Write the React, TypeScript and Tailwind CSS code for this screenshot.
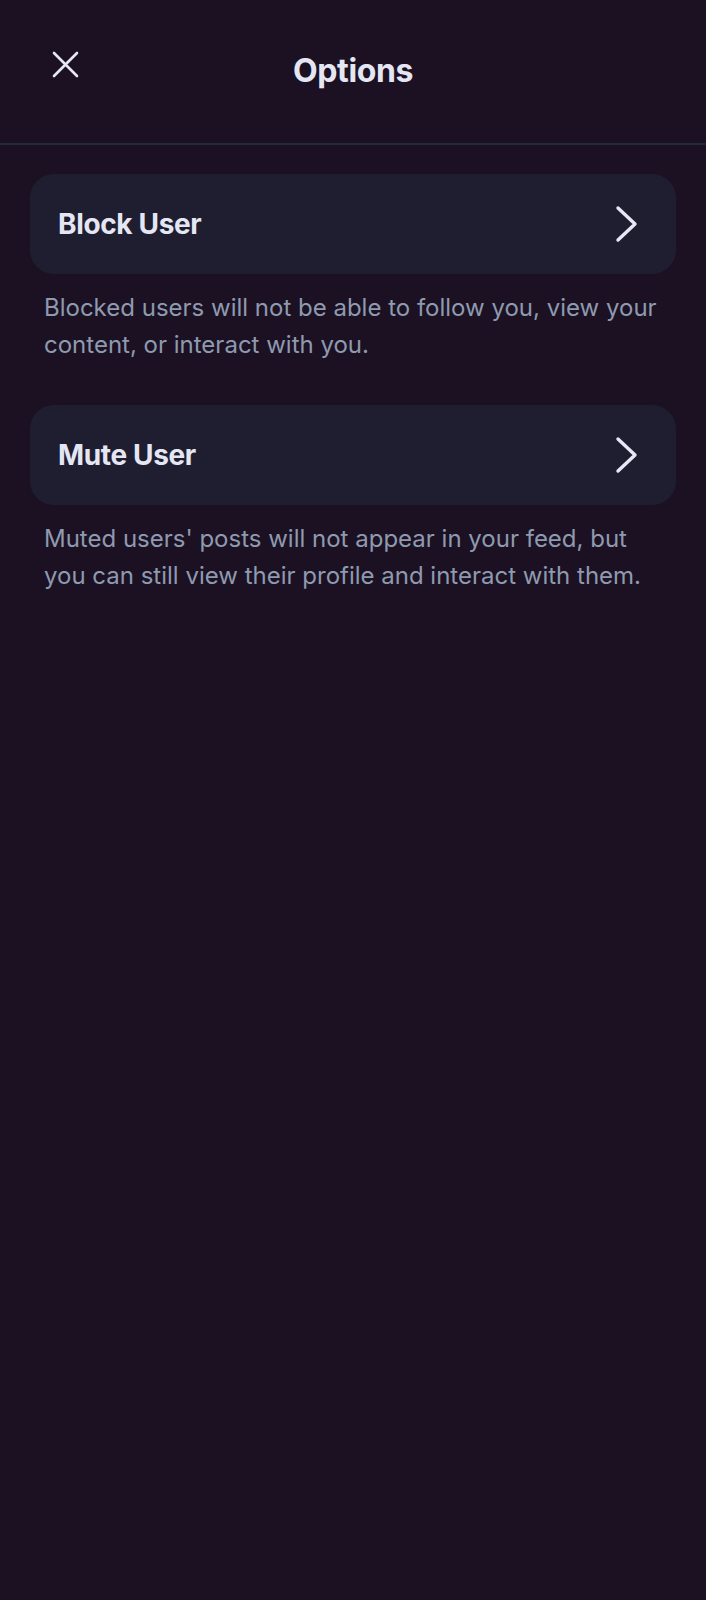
import React from "react";

function Chevron() {
  return (
    <svg width="24" height="38" viewBox="0 0 24 38" fill="none" className="shrink-0">
      <path d="M3 3 L20 19 L3 35" stroke="#e6e9f5" strokeWidth="3.4" strokeLinecap="round" strokeLinejoin="round" />
    </svg>
  );
}

function Option({ title, desc }: { title: string; desc: string }) {
  return (
    <div className="flex flex-col">
      <div className="h-[100px] rounded-[24px] bg-[#1f1e30] flex items-center justify-between pl-[28px] pr-[37px]">
        <span className="text-[28px] font-bold text-[#e4e7f3] tracking-[-0.35px]">{title}</span>
        <Chevron />
      </div>
      <p className="px-[14px] pt-[15px] text-[24px] leading-[37px] text-[#8e9ab0] tracking-[0px]">{desc}</p>
    </div>
  );
}

export default function App() {
  return (
    <div
      className="w-[706px] h-[1600px] bg-[#1c1122] flex flex-col"
      style={{ fontFamily: "Inter, Roboto, 'Liberation Sans', sans-serif" }}
    >
      <div className="relative h-[145px] flex items-start justify-center pt-[50px] border-b-2 border-[#252a3a]">
        <svg width="27" height="27" viewBox="0 0 27 27" className="absolute left-[52px] top-[51px]">
          <path d="M2 2 L25 25 M25 2 L2 25" stroke="#e6e9f5" strokeWidth="2.6" strokeLinecap="round" />
        </svg>
        <h1 className="text-[32px] font-bold text-[#e4e7f3] leading-[42px] tracking-[-0.4px]">Options</h1>
      </div>
      <div className="flex flex-col gap-[42px] px-[30px] pt-[29px]">
        <Option
          title="Block User"
          desc="Blocked users will not be able to follow you, view your content, or interact with you."
        />
        <Option
          title="Mute User"
          desc="Muted users' posts will not appear in your feed, but you can still view their profile and interact with them."
        />
      </div>
    </div>
  );
}
